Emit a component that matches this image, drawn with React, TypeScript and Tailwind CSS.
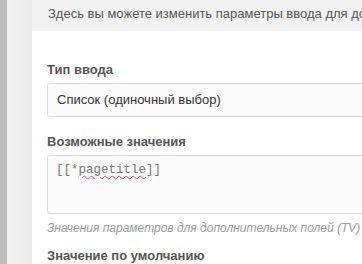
export default function App() {
  return (
    <div className="flex h-[264px] w-[362px] overflow-hidden bg-white font-['Liberation_Sans',Arial,sans-serif]">
      <div className="w-[7px] shrink-0 bg-[#bdbdbd]" />
      <div className="w-[25px] shrink-0 bg-gradient-to-r from-[#f0f0f0] to-[#ebebeb]" />
      <div className="flex min-w-0 flex-1 flex-col">
        <div className="h-[31px] shrink-0 whitespace-nowrap bg-[#f2f2f2] pl-4 pt-[4px] text-[13px] text-[#555]">
          Здесь вы можете изменить параметры ввода для дополнительного поля
        </div>
        <div className="flex flex-col pl-[15px] pt-[31px]">
          <label className="text-[13px] font-bold leading-[16px] text-[#555]">Тип ввода</label>
          <div className="mt-[5px] flex h-[34px] w-[400px] items-center rounded-[3px] border border-[#dcdcdc] bg-[#fbfbfb] pl-[9px] text-[13px] text-[#333]">
            Список (одиночный выбор)
          </div>
          <label className="mt-[17px] text-[13px] font-bold leading-[16px] text-[#555]">Возможные значения</label>
          <div className="mt-[5px] h-[59px] w-[400px] rounded-[3px] border border-[#dcdcdc] bg-[#fbfbfb] pl-[8px] pt-[6px] font-['Liberation_Mono',monospace] text-[12.5px] leading-[16px] text-[#777]">
            [[*<span className="underline decoration-[#e05050] decoration-wavy decoration-1 underline-offset-2">pagetitle</span>]]
          </div>
          <p className="mt-[7px] whitespace-nowrap text-[12px] italic leading-[15px] text-[#9a9a9a]">
            Значения параметров для дополнительных полей (TV)
          </p>
          <label className="mt-[12px] text-[13px] font-bold leading-[16px] text-[#555]">Значение по умолчанию</label>
        </div>
      </div>
    </div>
  )
}
